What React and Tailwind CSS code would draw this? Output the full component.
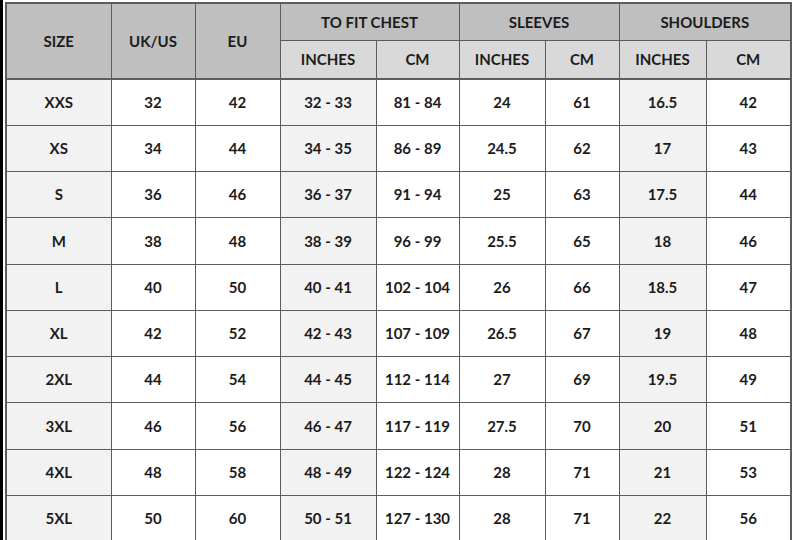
const rows = [
  ['XXS', '32', '42', '32 - 33', '81 - 84', '24', '61', '16.5', '42'],
  ['XS', '34', '44', '34 - 35', '86 - 89', '24.5', '62', '17', '43'],
  ['S', '36', '46', '36 - 37', '91 - 94', '25', '63', '17.5', '44'],
  ['M', '38', '48', '38 - 39', '96 - 99', '25.5', '65', '18', '46'],
  ['L', '40', '50', '40 - 41', '102 - 104', '26', '66', '18.5', '47'],
  ['XL', '42', '52', '42 - 43', '107 - 109', '26.5', '67', '19', '48'],
  ['2XL', '44', '54', '44 - 45', '112 - 114', '27', '69', '19.5', '49'],
  ['3XL', '46', '56', '46 - 47', '117 - 119', '27.5', '70', '20', '51'],
  ['4XL', '48', '58', '48 - 49', '122 - 124', '28', '71', '21', '53'],
  ['5XL', '50', '60', '50 - 51', '127 - 130', '28', '71', '22', '56'],
]

// columns with the light grey fill
const shaded = [0, 3, 7]
const widths = [105, 84, 85, 96, 83, 86, 74, 87, 85]

const App = () => {
  return (
    <div className="flex h-[540px] w-[794px] overflow-hidden bg-white text-[#1c1c1c]" style={{ fontFamily: 'Lato, "Open Sans", sans-serif' }}>
      <div className="w-[3px] shrink-0 bg-black" />
      <div className="ml-[2px] mt-[2px]">
        <table className="table-fixed border-collapse border-2 border-[#5c5c5c] text-[15px] font-bold">
          <colgroup>
            {widths.map((w, i) => (
              <col key={i} style={{ width: w }} />
            ))}
          </colgroup>
          <thead>
            <tr className="h-[37px]">
              <th rowSpan={2} className="border border-[#5c5c5c] bg-[#bfbfbf]">SIZE</th>
              <th rowSpan={2} className="border border-[#5c5c5c] bg-[#bfbfbf]">UK/US</th>
              <th rowSpan={2} className="border border-[#5c5c5c] bg-[#bfbfbf]">EU</th>
              <th colSpan={2} className="border border-[#5c5c5c] bg-[#bfbfbf]">TO FIT CHEST</th>
              <th colSpan={2} className="border border-[#5c5c5c] bg-[#bfbfbf]">SLEEVES</th>
              <th colSpan={2} className="border border-[#5c5c5c] bg-[#bfbfbf]">SHOULDERS</th>
            </tr>
            <tr className="h-[39px] border-b-2 border-[#5c5c5c]">
              {['INCHES', 'CM', 'INCHES', 'CM', 'INCHES', 'CM'].map((t, i) => (
                <th key={i} className="border border-[#5c5c5c] bg-[#d9d9d9]">{t}</th>
              ))}
            </tr>
          </thead>
          <tbody>
            {rows.map((r) => (
              <tr key={r[0]} className="h-[46.25px]">
                {r.map((v, i) => (
                  <td
                    key={i}
                    className={`border border-[#5c5c5c] text-center ${shaded.includes(i) ? 'bg-[#f2f2f2]' : 'bg-white'}`}
                  >
                    {v}
                  </td>
                ))}
              </tr>
            ))}
          </tbody>
        </table>
      </div>
    </div>
  )
}

export default App
